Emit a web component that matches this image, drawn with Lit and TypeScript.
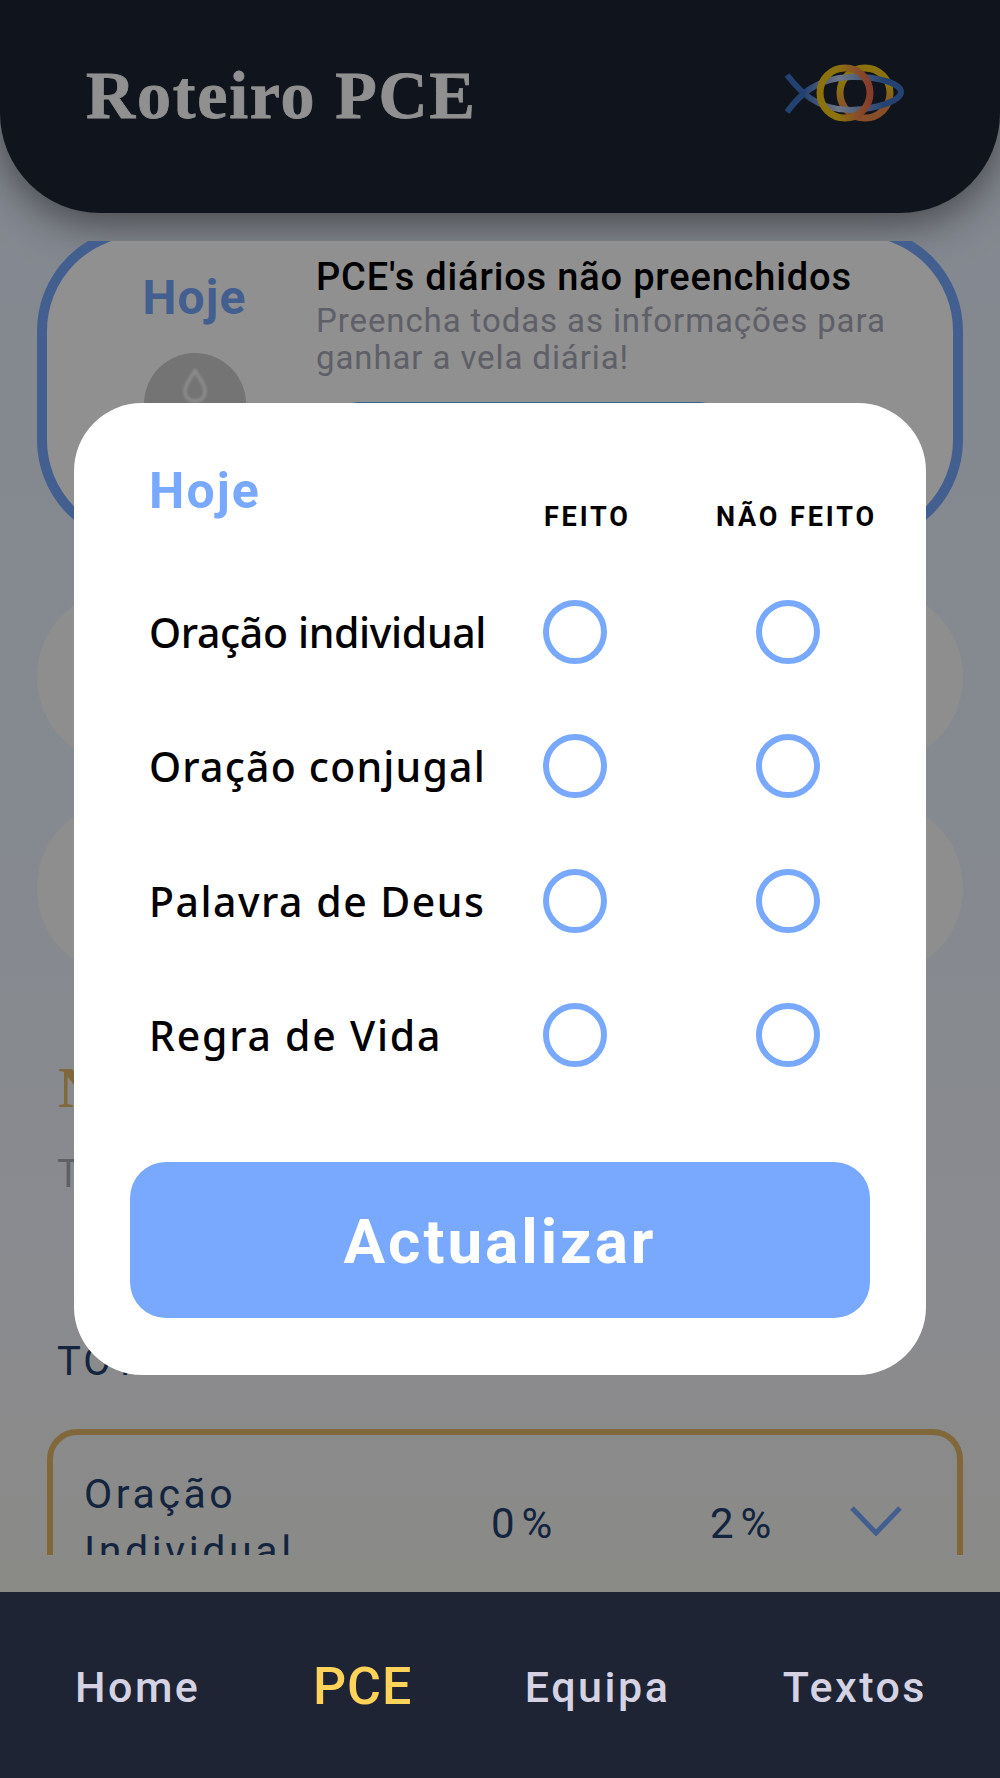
import { LitElement, html, css } from "lit";
import { customElement } from "lit/decorators.js";

// tracking differs per row, the labels all fill about the same width in the app
const ROWS = [
  { label: "Oração individual", tracking: -0.35 },
  { label: "Oração conjugal", tracking: 1.2 },
  { label: "Palavra de Deus", tracking: 1.5 },
  { label: "Regra de Vida", tracking: 1.77 },
];
const NAV = [
  { label: "Home", active: false },
  { label: "PCE", active: true },
  { label: "Equipa", active: false },
  { label: "Textos", active: false },
];

@customElement("app-root")
export class AppRoot extends LitElement {
  static styles = css`
    :host {
      display: block;
      width: 1000px;
      height: 1778px;
      position: relative;
      overflow: hidden;
      font-family: Roboto, "Noto Sans", sans-serif;
    }
    .screen {
      height: 1778px;
      display: flex;
      flex-direction: column;
      background: linear-gradient(180deg, #e9f2ff 0%, #ebf3ff 45%, #f4f6fd 73%, #f5f5f0 88%);
    }
    .top {
      height: 213px;
      flex: none;
      box-sizing: border-box;
      padding: 0 95px 0 86px;
      display: flex;
      align-items: center;
      justify-content: space-between;
      background: #1e2433;
      border-radius: 0 0 100px 100px;
      box-shadow: 0 10px 44px rgba(0, 0, 0, 0.5);
    }
    .title {
      font-family: "Liberation Serif", serif;
      font-weight: 700;
      font-size: 68px;
      letter-spacing: 1.8px;
      color: #fff;
      margin-top: -23px;
      -webkit-text-stroke: 0.8px #fff;
    }
    .logo {
      width: 120px;
      height: 60px;
      margin-top: -27px;
    }
    .scroll {
      position: relative;
      margin-top: 28px;
      height: 1314px;
      flex: none;
      overflow: hidden;
    }
    .today {
      box-sizing: border-box;
      height: 319px;
      margin: -15px 37px 0;
      border: 10px solid #78a9ff;
      border-radius: 105px;
      background: #fff;
      display: grid;
      grid-template-columns: 269px 1fr;
    }
    .today-left {
      padding: 32px 0 0 26px;
      display: flex;
      flex-direction: column;
      align-items: center;
    }
    .today-word {
      font-size: 48px;
      line-height: 60px;
      font-weight: 700;
      letter-spacing: 1.2px;
      color: #78a9ff;
    }
    .candle {
      width: 102px;
      height: 88px;
      margin-top: 25px;
      border-radius: 50%;
      background: #cdcdcd;
      display: flex;
      justify-content: center;
      padding-top: 14px;
      box-sizing: content-box;
    }
    .flame {
      filter: blur(1px);
    }
    .today-title {
      margin-top: 18px;
      font-size: 38px;
      line-height: 46px;
      font-weight: 500;
      letter-spacing: 0.83px;
      color: #000;
      white-space: nowrap;
    }
    .today-sub {
      margin-top: 1.5px;
      font-size: 33px;
      line-height: 37px;
      letter-spacing: 0.9px;
      color: #a8a8b8;
      white-space: nowrap;
    }
    .fill {
      width: 382px;
      height: 60px;
      margin: 26px 0 0 22px;
      border-radius: 20px;
      background: #78a9ff;
    }
    .pill {
      height: 176px;
      margin: 35px 37px 0;
      border-radius: 88px;
      background: #fcfcfc;
    }
    .pill.first {
      margin-top: 44px;
    }
    .section {
      margin: 83px 0 0 58px;
      font-family: "Liberation Serif", serif;
      font-weight: 700;
      font-size: 58px;
      line-height: 58px;
      color: #e3b867;
    }
    .sub {
      margin: 34px 0 0 57px;
      font-size: 38px;
      line-height: 46px;
      color: #a8a8b8;
    }
    .total {
      margin: 142px 0 0 57px;
      display: grid;
      grid-template-columns: 433px 219px auto;
      font-size: 40px;
      line-height: 46px;
      letter-spacing: 3px;
      color: #24406f;
    }
    .total .pct {
      margin-top: -3px;
      color: #e3b867;
      font-size: 42px;
      letter-spacing: 7px;
    }
    .item {
      box-sizing: border-box;
      height: 300px;
      margin: 44px 37px 0 47px;
      padding: 31px 0 0 31px;
      border: 6px solid #e3b867;
      border-radius: 30px;
      display: grid;
      grid-template-columns: 407px 219px 140px auto;
      align-items: start;
      font-size: 41px;
      letter-spacing: 3.6px;
      color: #24406f;
    }
    .item-name {
      line-height: 57px;
    }
    .item-val {
      line-height: 46px;
      margin-top: 35px;
      font-size: 42px;
      letter-spacing: 7px;
    }
    .chev {
      width: 52px;
      height: 30px;
      margin-top: 40px;
      filter: blur(0.6px);
    }
    .spacer {
      flex: 1;
    }
    .nav {
      position: relative;
      z-index: 3;
      height: 186px;
      flex: none;
      background: #1e2433;
      box-sizing: border-box;
      padding: 0 73px 0 75px;
      display: flex;
      align-items: center;
      justify-content: space-between;
      font-size: 43px;
      font-weight: 500;
      letter-spacing: 2.5px;
      color: #d5d3e3;
    }
    .nav span {
      margin-top: 3px;
    }
    .nav .on {
      font-size: 52px;
      font-weight: 500;
      letter-spacing: 1px;
      color: #ffd25a;
    }
    .shade {
      position: absolute;
      inset: 0 0 186px 0;
      z-index: 2;
      background: rgba(0, 0, 0, 0.435);
      box-sizing: border-box;
      padding-top: 403px;
      display: flex;
      justify-content: center;
      align-items: flex-start;
    }
    .modal {
      width: 852px;
      height: 972px;
      box-sizing: border-box;
      padding: 56px 56px 0;
      background: #fff;
      border-radius: 68px;
      display: flex;
      flex-direction: column;
    }
    .modal-head {
      height: 106px;
      box-sizing: border-box;
      padding: 0 0 0 19px;
      display: flex;
      align-items: flex-start;
    }
    .modal-word {
      flex: 1;
      margin-top: 7px;
      font-size: 50px;
      line-height: 50px;
      font-weight: 700;
      letter-spacing: 2.1px;
      color: #78a9ff;
    }
    .modal-col {
      margin-top: 42px;
      font-size: 27px;
      line-height: 32px;
      font-weight: 700;
      letter-spacing: 2.9px;
      color: #000;
    }
    .modal-col.no {
      margin: 42px -7px 0 85px;
    }
    .row {
      height: 134.3px;
      display: grid;
      grid-template-columns: 394px 213px 64px;
      align-items: center;
      padding-left: 19px;
      font-family: "Noto Sans", sans-serif;
      font-size: 41px;
      font-weight: 500;
      color: #000;
    }
    .radio {
      width: 64px;
      height: 64px;
      box-sizing: border-box;
      border: 6px solid #78a9ff;
      border-radius: 50%;
    }
    .save {
      height: 156px;
      flex: none;
      box-sizing: border-box;
      padding-top: 3px;
      margin-top: 59.8px;
      border-radius: 36px;
      background: #78a9ff;
      display: flex;
      align-items: center;
      justify-content: center;
      font-size: 62px;
      font-weight: 700;
      letter-spacing: 3px;
      color: #fff;
    }
  `;

  renderLogo() {
    return html`<svg class="logo" viewBox="786 63 120 60" fill="none">
      <defs>
        <linearGradient id="ringA" x1="0" y1="0" x2="1" y2="0">
          <stop offset="0.35" stop-color="#f7cb16"></stop>
          <stop offset="0.75" stop-color="#f08a4a"></stop>
          <stop offset="1" stop-color="#ef6a4c"></stop>
        </linearGradient>
        <linearGradient id="ringB" x1="0" y1="0" x2="0" y2="1">
          <stop offset="0.35" stop-color="#f7cb16"></stop>
          <stop offset="0.8" stop-color="#f08a4a"></stop>
        </linearGradient>
        <linearGradient id="fish" gradientUnits="userSpaceOnUse" x1="788" y1="0" x2="903" y2="0">
          <stop offset="0.15" stop-color="#3f74c8"></stop>
          <stop offset="0.45" stop-color="#c4d1ec"></stop>
          <stop offset="0.85" stop-color="#3f74c8"></stop>
        </linearGradient>
      </defs>
      <circle cx="866" cy="93" r="25" stroke="url(#ringB)" stroke-width="7"></circle>
      <path
        d="M788 112C800 96 816 78 852 77C880 76 902 84 902 92C902 100 880 109 852 110C816 110 800 90 788 75"
        stroke="url(#fish)"
        stroke-width="6"
      ></path>
      <circle cx="846" cy="93" r="25" stroke="url(#ringA)" stroke-width="7"></circle>
    </svg>`;
  }

  render() {
    return html`<div class="screen">
        <header class="top">
          <div class="title">Roteiro PCE</div>
          ${this.renderLogo()}
        </header>
        <main class="scroll">
          <section class="today">
            <div class="today-left">
              <div class="today-word">Hoje</div>
              <div class="candle">
                <svg class="flame" width="24" height="36" viewBox="0 0 24 36" fill="none">
                  <path
                    d="M12 2C13 9 22 15 22 24C22 30 18 34 12 34C6 34 2 30 2 24C2 15 11 9 12 2Z"
                    stroke="#f2f2f2"
                    stroke-width="4"
                  ></path>
                </svg>
              </div>
            </div>
            <div>
              <div class="today-title">PCE's diários não preenchidos</div>
              <div class="today-sub">Preencha todas as informações para<br />ganhar a vela diária!</div>
              <div class="fill"></div>
            </div>
          </section>
          <div class="pill first"></div>
          <div class="pill"></div>
          <div class="section">N</div>
          <div class="sub">T</div>
          <div class="total">
            <span>TOTAL</span><span class="pct">0%</span><span class="pct">2%</span>
          </div>
          <section class="item">
            <div class="item-name">Oração<br />Individual</div>
            <div class="item-val">0%</div>
            <div class="item-val">2%</div>
            <svg class="chev" viewBox="0 0 52 30" fill="none">
              <path d="M2 2L26 27L50 2" stroke="#78a9ff" stroke-width="5"></path>
            </svg>
          </section>
        </main>
        <div class="spacer"></div>
        <nav class="nav">
          ${NAV.map((n) => html`<span class=${n.active ? "on" : ""}>${n.label}</span>`)}
        </nav>
      </div>
      <div class="shade">
        <div class="modal">
          <div class="modal-head">
            <div class="modal-word">Hoje</div>
            <div class="modal-col">FEITO</div>
            <div class="modal-col no">NÃO FEITO</div>
          </div>
          ${ROWS.map(
            (r) => html`<div class="row">
              <span style="letter-spacing: ${r.tracking}px">${r.label}</span>
              <div class="radio"></div>
              <div class="radio"></div>
            </div>`
          )}
          <div class="save">Actualizar</div>
        </div>
      </div>`;
  }
}
